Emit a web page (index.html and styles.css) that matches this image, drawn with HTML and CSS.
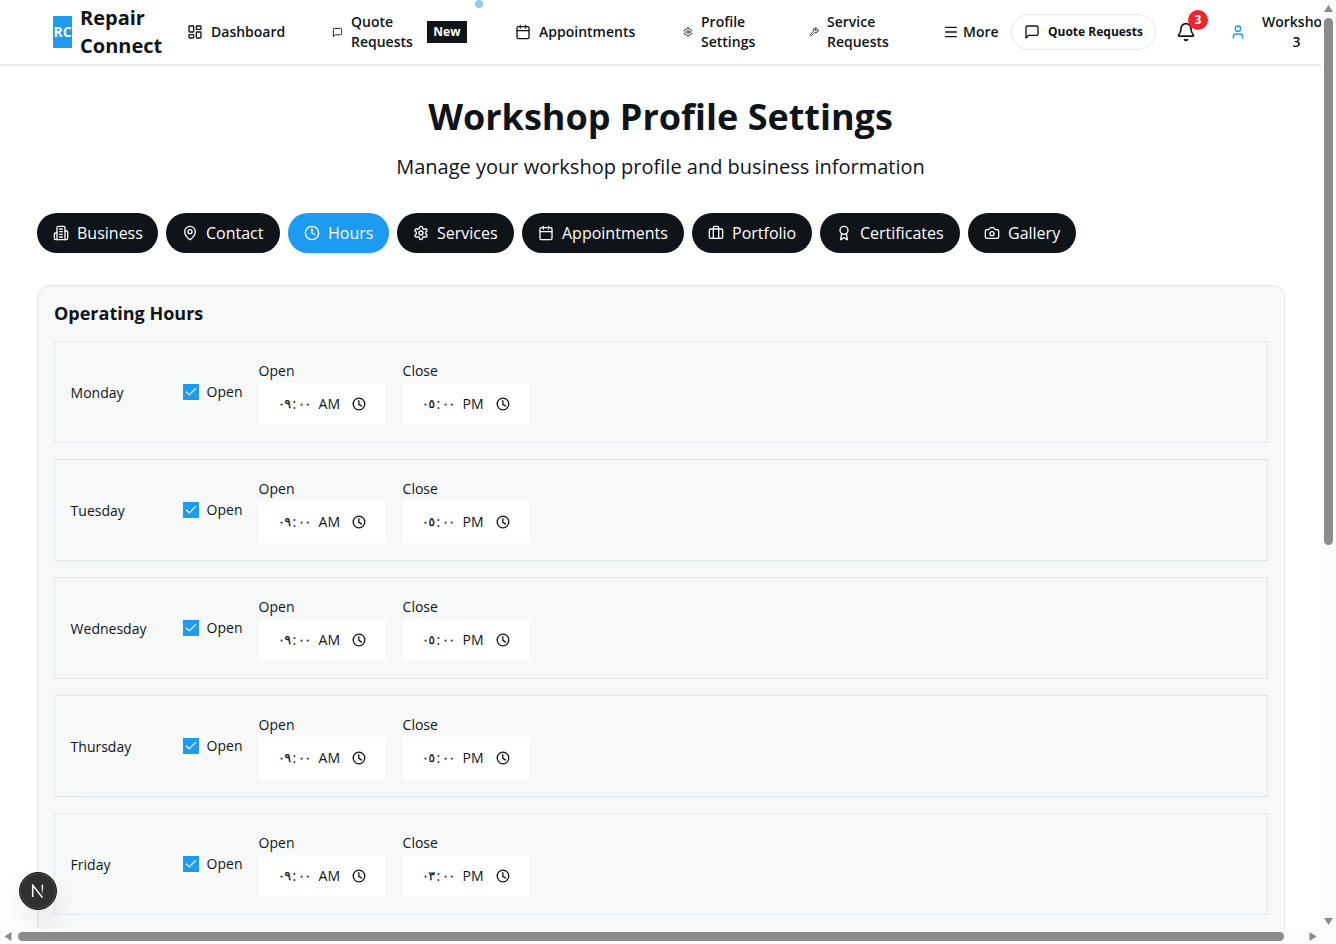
FILE: index.html
```html
<!DOCTYPE html>
<html lang="en">
<head>
<meta charset="utf-8">
<title>Workshop Profile Settings</title>
<link rel="stylesheet" href="styles.css">
</head>
<body>
<svg class="sprite" width="0" height="0">
  <symbol id="grid" viewBox="0 0 24 24"><rect width="7" height="9" x="3" y="3" rx="1"/><rect width="7" height="5" x="14" y="3" rx="1"/><rect width="7" height="9" x="14" y="12" rx="1"/><rect width="7" height="5" x="3" y="16" rx="1"/></symbol>
  <symbol id="message" viewBox="0 0 24 24"><path d="M21 15a2 2 0 0 1-2 2H7l-4 4V5a2 2 0 0 1 2-2h14a2 2 0 0 1 2 2z"/></symbol>
  <symbol id="calendar" viewBox="0 0 24 24"><path d="M8 2v4M16 2v4M3 10h18"/><rect width="18" height="18" x="3" y="4" rx="2"/></symbol>
  <symbol id="gear" viewBox="0 0 24 24"><path d="M12.22 2h-.44a2 2 0 0 0-2 2v.18a2 2 0 0 1-1 1.73l-.43.25a2 2 0 0 1-2 0l-.15-.08a2 2 0 0 0-2.73.73l-.22.38a2 2 0 0 0 .73 2.73l.15.1a2 2 0 0 1 1 1.72v.51a2 2 0 0 1-1 1.74l-.15.09a2 2 0 0 0-.73 2.73l.22.38a2 2 0 0 0 2.73.73l.15-.08a2 2 0 0 1 2 0l.43.25a2 2 0 0 1 1 1.73V20a2 2 0 0 0 2 2h.44a2 2 0 0 0 2-2v-.18a2 2 0 0 1 1-1.73l.43-.25a2 2 0 0 1 2 0l.15.08a2 2 0 0 0 2.73-.73l.22-.39a2 2 0 0 0-.73-2.73l-.15-.08a2 2 0 0 1-1-1.74v-.5a2 2 0 0 1 1-1.74l.15-.09a2 2 0 0 0 .73-2.73l-.22-.38a2 2 0 0 0-2.73-.73l-.15.08a2 2 0 0 1-2 0l-.43-.25a2 2 0 0 1-1-1.73V4a2 2 0 0 0-2-2z"/><circle cx="12" cy="12" r="3"/></symbol>
  <symbol id="wrench" viewBox="0 0 24 24"><path d="M14.7 6.3a1 1 0 0 0 0 1.4l1.6 1.6a1 1 0 0 0 1.4 0l3.77-3.77a6 6 0 0 1-7.94 7.94l-6.91 6.91a2.12 2.12 0 0 1-3-3l6.91-6.91a6 6 0 0 1 7.94-7.94l-3.76 3.76z"/></symbol>
  <symbol id="menu" viewBox="0 0 24 24"><path d="M4 5h16M4 12h16M4 19h16"/></symbol>
  <symbol id="bell" viewBox="0 0 24 24"><path d="M10.27 21a2 2 0 0 0 3.46 0"/><path d="M3.26 15.33A1 1 0 0 0 4 17h16a1 1 0 0 0 .74-1.67C19.41 13.96 18 12.5 18 8A6 6 0 0 0 6 8c0 4.5-1.41 5.96-2.74 7.33"/></symbol>
  <symbol id="user" viewBox="0 0 24 24"><path d="M19 21v-2a4 4 0 0 0-4-4H9a4 4 0 0 0-4 4v2"/><circle cx="12" cy="7" r="4"/></symbol>
  <symbol id="building" viewBox="0 0 24 24"><path d="M6 22V4a2 2 0 0 1 2-2h8a2 2 0 0 1 2 2v18Z"/><path d="M6 12H4a2 2 0 0 0-2 2v6a2 2 0 0 0 2 2h2M18 9h2a2 2 0 0 1 2 2v9a2 2 0 0 1-2 2h-2M10 6h4M10 10h4M10 14h4M10 18h4"/></symbol>
  <symbol id="pin" viewBox="0 0 24 24"><path d="M20 10c0 4.99-5.54 10.19-7.4 11.8a1 1 0 0 1-1.2 0C9.54 20.19 4 14.99 4 10a8 8 0 0 1 16 0"/><circle cx="12" cy="10" r="3"/></symbol>
  <symbol id="clock" viewBox="0 0 24 24"><circle cx="12" cy="12" r="10"/><path d="M12 6v6l4 2"/></symbol>
  <symbol id="case" viewBox="0 0 24 24"><path d="M16 20V4a2 2 0 0 0-2-2h-4a2 2 0 0 0-2 2v16"/><rect width="20" height="14" x="2" y="6" rx="2"/></symbol>
  <symbol id="award" viewBox="0 0 24 24"><path d="m15.48 12.89 1.51 8.53a.5.5 0 0 1-.81.47l-3.58-2.69a1 1 0 0 0-1.2 0l-3.58 2.69a.5.5 0 0 1-.81-.47l1.51-8.53"/><circle cx="12" cy="8" r="6"/></symbol>
  <symbol id="camera" viewBox="0 0 24 24"><path d="M14.5 4h-5L7 7H4a2 2 0 0 0-2 2v9a2 2 0 0 0 2 2h16a2 2 0 0 0 2-2V9a2 2 0 0 0-2-2h-3z"/><circle cx="12" cy="13" r="3"/></symbol>
  <symbol id="check" viewBox="0 0 24 24"><path d="M20 6 9 17l-5-5"/></symbol>
  <symbol id="time" viewBox="0 0 24 24"><circle cx="12" cy="12" r="8.7"/><path d="M11.7 7v5.5l4 2.4"/></symbol>
</svg>
<div class="window">
  <div class="viewport">
    <header class="header">
      <div class="brand"><span class="logo">RC</span><span class="brand-name">Repair<br>Connect</span></div>
      <a class="nav-item"><svg class="icon i16"><use href="#grid"/></svg><span>Dashboard</span></a>
      <a class="nav-item"><svg class="icon i11"><use href="#message"/></svg><span>Quote<br>Requests</span><b class="new">New</b><i class="dot"></i></a>
      <a class="nav-item"><svg class="icon i16"><use href="#calendar"/></svg><span>Appointments</span></a>
      <a class="nav-item"><svg class="icon i10"><use href="#gear"/></svg><span>Profile<br>Settings</span></a>
      <a class="nav-item"><svg class="icon i10"><use href="#wrench"/></svg><span>Service<br>Requests</span></a>
      <a class="nav-item more"><svg class="icon i16"><use href="#menu"/></svg><span>More</span></a>
      <a class="quote"><svg class="icon i16"><use href="#message"/></svg><span>Quote Requests</span></a>
      <div class="bell"><svg class="icon i20"><use href="#bell"/></svg><b class="count">3</b></div>
      <div class="account"><svg class="icon i16"><use href="#user"/></svg><span>Workshop<br>3</span></div>
    </header>
    <main class="main">
      <h1 class="title">Workshop Profile Settings</h1>
      <p class="subtitle">Manage your workshop profile and business information</p>
      <nav class="tabs">
        <a class="tab t-business"><svg class="icon i16"><use href="#building"/></svg><span>Business</span></a>
        <a class="tab t-contact"><svg class="icon i16"><use href="#pin"/></svg><span>Contact</span></a>
        <a class="tab t-hours active"><svg class="icon i16"><use href="#clock"/></svg><span>Hours</span></a>
        <a class="tab t-services"><svg class="icon i16"><use href="#gear"/></svg><span>Services</span></a>
        <a class="tab t-appointments"><svg class="icon i16"><use href="#calendar"/></svg><span>Appointments</span></a>
        <a class="tab t-portfolio"><svg class="icon i16"><use href="#case"/></svg><span>Portfolio</span></a>
        <a class="tab t-certificates"><svg class="icon i16"><use href="#award"/></svg><span>Certificates</span></a>
        <a class="tab t-gallery"><svg class="icon i16"><use href="#camera"/></svg><span>Gallery</span></a>
      </nav>
      <section class="card">
        <h2 class="card-title">Operating Hours</h2>
        <div class="day">
          <span class="day-name">Monday</span>
          <label class="toggle"><span class="box"><svg class="icon i14"><use href="#check"/></svg></span>Open</label>
          <div class="field"><span>Open</span><div class="input"><span class="num">٠٩</span><span class="colon">:</span><span class="num">٠٠</span><span class="ampm">AM</span><svg class="icon i16"><use href="#time"/></svg></div></div>
          <div class="field"><span>Close</span><div class="input"><span class="num">٠٥</span><span class="colon">:</span><span class="num">٠٠</span><span class="ampm">PM</span><svg class="icon i16"><use href="#time"/></svg></div></div>
        </div>
        <div class="day">
          <span class="day-name">Tuesday</span>
          <label class="toggle"><span class="box"><svg class="icon i14"><use href="#check"/></svg></span>Open</label>
          <div class="field"><span>Open</span><div class="input"><span class="num">٠٩</span><span class="colon">:</span><span class="num">٠٠</span><span class="ampm">AM</span><svg class="icon i16"><use href="#time"/></svg></div></div>
          <div class="field"><span>Close</span><div class="input"><span class="num">٠٥</span><span class="colon">:</span><span class="num">٠٠</span><span class="ampm">PM</span><svg class="icon i16"><use href="#time"/></svg></div></div>
        </div>
        <div class="day">
          <span class="day-name">Wednesday</span>
          <label class="toggle"><span class="box"><svg class="icon i14"><use href="#check"/></svg></span>Open</label>
          <div class="field"><span>Open</span><div class="input"><span class="num">٠٩</span><span class="colon">:</span><span class="num">٠٠</span><span class="ampm">AM</span><svg class="icon i16"><use href="#time"/></svg></div></div>
          <div class="field"><span>Close</span><div class="input"><span class="num">٠٥</span><span class="colon">:</span><span class="num">٠٠</span><span class="ampm">PM</span><svg class="icon i16"><use href="#time"/></svg></div></div>
        </div>
        <div class="day">
          <span class="day-name">Thursday</span>
          <label class="toggle"><span class="box"><svg class="icon i14"><use href="#check"/></svg></span>Open</label>
          <div class="field"><span>Open</span><div class="input"><span class="num">٠٩</span><span class="colon">:</span><span class="num">٠٠</span><span class="ampm">AM</span><svg class="icon i16"><use href="#time"/></svg></div></div>
          <div class="field"><span>Close</span><div class="input"><span class="num">٠٥</span><span class="colon">:</span><span class="num">٠٠</span><span class="ampm">PM</span><svg class="icon i16"><use href="#time"/></svg></div></div>
        </div>
        <div class="day">
          <span class="day-name">Friday</span>
          <label class="toggle"><span class="box"><svg class="icon i14"><use href="#check"/></svg></span>Open</label>
          <div class="field"><span>Open</span><div class="input"><span class="num">٠٩</span><span class="colon">:</span><span class="num">٠٠</span><span class="ampm">AM</span><svg class="icon i16"><use href="#time"/></svg></div></div>
          <div class="field"><span>Close</span><div class="input"><span class="num">٠٣</span><span class="colon">:</span><span class="num">٠٠</span><span class="ampm">PM</span><svg class="icon i16"><use href="#time"/></svg></div></div>
        </div>
      </section>
    </main>
    <div class="dev-badge"><svg class="dev-mark" viewBox="0 0 14 14"><defs><linearGradient id="fade" x1="0" y1="0" x2="0" y2="1"><stop offset=".3" stop-color="#fff"/><stop offset="1" stop-color="#fff" stop-opacity="0"/></linearGradient></defs><path d="M1.7 13V1.2L11.5 13.6" fill="none" stroke="#fff" stroke-width="1.5"/><rect x="10.6" y=".6" width="1.5" height="10" fill="url(#fade)"/></svg></div>
  </div>
  <div class="vbar">
    <svg class="arrow" viewBox="0 0 15 15"><path d="M7.5 5 12 12h-9z"/></svg>
    <div class="vthumb"></div>
    <svg class="arrow end" viewBox="0 0 15 15"><path d="M7.5 11 3 4h9z"/></svg>
  </div>
  <div class="hbar">
    <svg class="arrow" viewBox="0 0 15 15"><path d="M4.5 7.5 11.5 3v9z"/></svg>
    <div class="hthumb"></div>
    <svg class="arrow end" viewBox="0 0 15 15"><path d="M10.5 7.5 3.5 3v9z"/></svg>
  </div>
</div>
</body>
</html>
```
FILE: styles.css
```css
* { box-sizing: border-box; }
body { margin: 0; font-family: "Open Sans", "Noto Sans", sans-serif; color: #0f1419; background: #fff; overflow: hidden; }
.sprite { position: absolute; }
.icon { display: block; flex: none; fill: none; stroke: currentColor; stroke-width: 2; stroke-linecap: round; stroke-linejoin: round; }
.i10 { width: 10px; height: 10px; }
.i11 { width: 11px; height: 11px; }
.i14 { width: 14px; height: 14px; }
.i16 { width: 16px; height: 16px; }
.i20 { width: 20px; height: 20px; }

.window { display: grid; grid-template: 929px 15px / 1321px 15px; width: 1336px; height: 944px; overflow: hidden; background: #fcfcfc; }
.viewport { position: relative; overflow: hidden; background: #fff; }

.header { display: grid; grid-template-columns: 134px 145px 183px 168px 126px 135px 67px 145px 64px 120px; align-items: center; height: 65px; padding-left: 53px; border-bottom: 1px solid #e1e8ed; box-shadow: 0 1px 3px rgba(15, 20, 25, .1); font-size: 14px; line-height: 20px; font-weight: 600; }
.brand { display: flex; align-items: center; gap: 8px; }
.logo { display: flex; align-items: center; justify-content: center; width: 19px; height: 32px; background: #1d9bf0; color: #fff; font-size: 14px; font-weight: 700; }
.brand-name { font-size: 20px; line-height: 28px; font-weight: 700; }
.nav-item { position: relative; display: flex; align-items: center; gap: 8px; }
.new { height: 22px; margin-left: 6px; padding: 0 6.5px; background: #0f1419; color: #fff; font-size: 12px; line-height: 22px; font-weight: 700; }
.dot { position: absolute; left: 143px; top: -12px; width: 8px; height: 8px; border-radius: 50%; background: #8ecdf8; }
.more { gap: 4px; }
.more .icon { margin-left: -1px; }
.quote { display: flex; align-items: center; gap: 8px; height: 36px; padding-left: 12px; border: 1px solid #e1e8ed; border-radius: 18px; font-size: 12px; font-weight: 700; white-space: nowrap; }
.bell { position: relative; padding-left: 20px; }
.count { position: absolute; left: 32px; top: -12px; width: 20px; height: 20px; border-radius: 50%; background: #f4212e; color: #fff; font-size: 12px; line-height: 20px; font-weight: 700; text-align: center; }
.account { display: flex; align-items: center; gap: 16px; padding-left: 10px; text-align: center; }
.account .icon { color: #1d9bf0; }

.main { padding: 29px 37px 0 37px; }
.title { margin: 0; font-size: 36px; line-height: 46px; font-weight: 700; text-align: center; }
.subtitle { margin: 13px 0 0; font-size: 20px; line-height: 28px; text-align: center; }
.tabs { display: flex; gap: 8px; margin-top: 32px; }
.tab { display: flex; align-items: center; gap: 8px; height: 40px; padding-left: 16px; border-radius: 20px; background: #0f1419; color: #fff; font-size: 16px; line-height: 24px; white-space: nowrap; }
.active { background: #1d9bf0; box-shadow: 0 1px 3px rgba(15, 20, 25, .1); }
.t-business { width: 121px; }
.t-contact { width: 114px; }
.t-hours { width: 101px; }
.t-services { width: 117px; }
.t-appointments { width: 162px; }
.t-portfolio { width: 120px; }
.t-certificates { width: 140px; }
.t-gallery { width: 108px; }

.card { width: 1248px; height: 900px; margin-top: 32px; padding: 15px 16px; border: 1px solid #e1e8ed; border-radius: 12px; background: #f7f9f9; }
.card-title { margin: 0 0 16px; font-size: 18px; line-height: 24px; font-weight: 700; }
.day { display: flex; align-items: center; height: 102px; margin-bottom: 16px; padding-left: 15.6px; border: 1px solid #e1e8ed; font-size: 14px; line-height: 20px; }
.day-name { width: 112.4px; padding-top: 2px; }
.toggle { display: flex; align-items: center; gap: 7.6px; width: 75.6px; }
.box { display: flex; align-items: center; justify-content: center; width: 16px; height: 16px; background: #1d9bf0; color: #fff; }
.field { width: 144px; padding-top: 2px; }
.field > span { display: block; margin-bottom: 2px; }
.input { display: flex; align-items: center; width: 126px; height: 42px; padding-left: 18px; background: #fff; }
.num { width: 16px; font-family: "DejaVu Sans", "Open Sans", sans-serif; font-size: 12px; line-height: 20px; text-align: center; -webkit-text-stroke: .3px currentColor; }
.colon { width: 4px; }
.ampm { width: 28px; margin-left: 6px; }
.input .icon { margin-left: 4.5px; }

.dev-badge { position: absolute; left: 19px; top: 872px; display: flex; align-items: center; justify-content: center; width: 38px; height: 38px; border: 1px solid #171717; border-radius: 50%; background: #303030; box-shadow: inset 0 0 0 1px #4c4c4c, 0 16px 32px -8px rgba(0, 0, 0, .24); }
.dev-mark { width: 14px; height: 14px; }

.vbar { display: flex; flex-direction: column; align-items: center; }
.hbar { display: flex; align-items: center; }
.arrow { display: block; flex: none; width: 15px; height: 15px; fill: #8b8b8b; }
.vthumb { width: 9px; height: 527px; margin-top: 3px; border-radius: 5px; background: #8b8b8b; }
.vbar .end { margin-top: auto; }
.hthumb { width: 1266px; height: 9px; margin-left: 3px; border-radius: 5px; background: #8b8b8b; }
.hbar .end { margin-left: auto; }
```
